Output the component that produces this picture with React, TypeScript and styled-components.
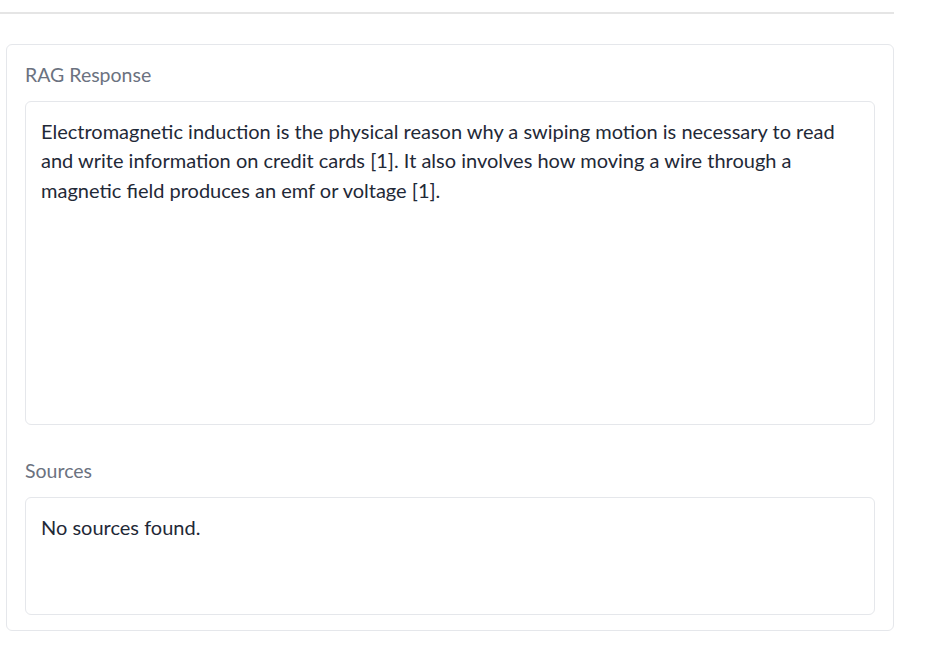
import React from 'react'
import styled, { createGlobalStyle } from 'styled-components'

const GlobalStyle = createGlobalStyle`
  html, body {
    margin: 0;
    padding: 0;
    background: #ffffff;
    font-family: "Lato", "Liberation Sans", sans-serif;
  }
`

const Page = styled.div`
  display: flex;
  flex-direction: column;
  padding-top: 12px;
  width: 931px;
`

const Rule = styled.div`
  width: 894px;
  height: 2px;
  background: #e5e5e5;
`

const Card = styled.section`
  margin: 30px 0 0 6px;
  width: 888px;
  box-sizing: border-box;
  border: 1px solid #e5e7eb;
  border-radius: 6px;
  background: #ffffff;
  padding: 18px 18px 15px;
  display: flex;
  flex-direction: column;
`

const Label = styled.div<{ $top?: number }>`
  margin-top: ${p => p.$top ?? 0}px;
  font-size: 19.5px;
  line-height: 24px;
  color: #6b7280;
`

const Box = styled.div<{ $h: number }>`
  margin-top: 14px;
  height: ${p => p.$h}px;
  box-sizing: border-box;
  border: 1px solid #e5e7eb;
  border-radius: 6px;
  background: #fff;
  padding: 15px 15px;
  font-size: 20px;
  line-height: 29.3px;
  color: #1f2937;
`

export default function App() {
  return (
    <>
      <GlobalStyle />
      <Page>
        <Rule />
        <Card>
          <Label>RAG Response</Label>
          <Box $h={324}>
            Electromagnetic induction is the physical reason why a swiping motion is necessary to read
            and write information on credit cards [1]. It also involves how moving a wire through a
            magnetic field produces an emf or voltage [1].
          </Box>
          <Label $top={34}>Sources</Label>
          <Box $h={118}>No sources found.</Box>
        </Card>
      </Page>
    </>
  )
}
